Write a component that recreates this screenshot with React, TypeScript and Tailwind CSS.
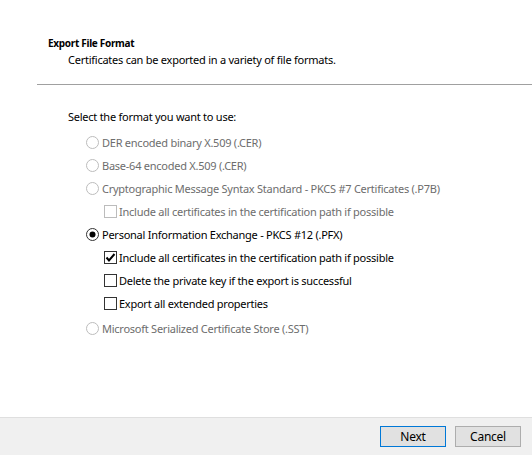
import React from "react";

function Radio({ checked, disabled }: { checked?: boolean; disabled?: boolean }) {
  return (
    <svg width="13" height="13" viewBox="0 0 13 13" className="shrink-0">
      <circle cx="6.5" cy="6.5" r="6" fill="#fff" stroke={disabled ? "#bcbcbc" : "#333333"} strokeWidth="1" />
      {checked && <circle cx="6.5" cy="6.5" r="3" fill="#000" />}
    </svg>
  );
}

function Check({ checked, disabled }: { checked?: boolean; disabled?: boolean }) {
  return (
    <svg width="13" height="13" viewBox="0 0 13 13" className="shrink-0">
      <rect x="0.5" y="0.5" width="12" height="12" fill="#fff" stroke={disabled ? "#bcbcbc" : "#333333"} strokeWidth="1" />
      {checked && <path d="M2.5 6.5 L5 9.5 L10.5 3" fill="none" stroke="#000" strokeWidth="2" />}
    </svg>
  );
}

function RadioRow({ label, checked, disabled }: { label: string; checked?: boolean; disabled?: boolean }) {
  return (
    <div className={`flex items-center h-[23px] gap-[3px] ${disabled ? "text-[#6d6d6d]" : "text-black"}`}>
      <Radio checked={checked} disabled={disabled} />
      <span>{label}</span>
    </div>
  );
}

function CheckRow({ label, checked, disabled }: { label: string; checked?: boolean; disabled?: boolean }) {
  return (
    <div className={`flex items-center h-[23px] gap-[2px] pl-[18px] ${disabled ? "text-[#6d6d6d]" : "text-black"}`}>
      <Check checked={checked} disabled={disabled} />
      <span>{label}</span>
    </div>
  );
}

export default function App() {
  return (
    <div
      className="w-[532px] h-[455px] bg-white flex flex-col text-[11px] leading-[16px] tracking-[-0.25px]"
      style={{ fontFamily: '"Noto Sans", "Liberation Sans", sans-serif' }}
    >
      <div className="flex-1 flex flex-col">
        <div className="pt-[36px] pl-[48px]">
          <div className="font-bold text-[10px] leading-[14px] tracking-[-0.3px]">Export File Format</div>
          <div className="pl-[20px] pt-[2px]">Certificates can be exported in a variety of file formats.</div>
        </div>
        <div className="ml-[37px] mt-[16px] h-px bg-[#a0a0a0]" />
        <div className="pl-[68px] pt-[24px]">
          <div>Select the format you want to use:</div>
          <div className="pl-[18px] pt-[6px] flex flex-col">
            <RadioRow label="DER encoded binary X.509 (.CER)" disabled />
            <RadioRow label="Base-64 encoded X.509 (.CER)" disabled />
            <RadioRow label="Cryptographic Message Syntax Standard - PKCS #7 Certificates (.P7B)" disabled />
            <CheckRow label="Include all certificates in the certification path if possible" disabled />
            <RadioRow label="Personal Information Exchange - PKCS #12 (.PFX)" checked />
            <CheckRow label="Include all certificates in the certification path if possible" checked />
            <CheckRow label="Delete the private key if the export is successful" />
            <CheckRow label="Export all extended properties" />
            <div className="h-[2px]" />
            <RadioRow label="Microsoft Serialized Certificate Store (.SST)" disabled />
          </div>
        </div>
      </div>
      <div className="h-[38px] bg-[#f0f0f0] border-t border-[#dfdfdf] flex items-start justify-end pt-[8px] pr-[11px] gap-[9px]">
        <button className="w-[66px] h-[21px] bg-[#e1e1e1] border border-[#0078d7] text-black text-[12px]">Next</button>
        <button className="w-[66px] h-[21px] bg-[#e1e1e1] border border-[#adadad] text-black text-[12px]">Cancel</button>
      </div>
    </div>
  );
}
